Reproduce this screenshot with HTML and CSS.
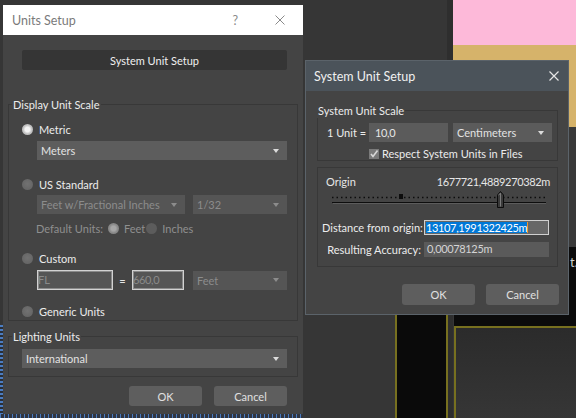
FILE: index.html
```html
<!DOCTYPE html>
<html>
  <head>
    <meta charset="UTF-8" />
    <title>Units Setup</title>
    <link rel="stylesheet" href="styles.css">
  </head>
  <body>
    <!-- viewports behind the dialogs -->
    <div class="backdrop">
      <div class="bd-strip"></div>
      <div class="bd-pink"></div>
      <div class="bd-tan"></div>
      <div class="bd-gray"></div>
      <div class="bd-black-right"><span class="bd-text">t.</span></div>
      <div class="bd-viewport"></div>
      <div class="bd-black-mid"></div>
      <div class="bd-blue-left"></div>
      <div class="bd-blue-bottom"></div>
    </div>

    <!-- Units Setup -->
    <div class="dialog units-dialog">
      <div class="titlebar light">
        <span class="title">Units Setup</span>
        <span class="tb-help">?</span>
        <svg class="tb-close" width="10" height="10" viewBox="0 0 10 10">
          <path d="M0.5 0.5L9.5 9.5M9.5 0.5L0.5 9.5" stroke="#8a8a8a" stroke-width="1" fill="none" />
        </svg>
      </div>
      <div class="dialog-body">
        <button class="btn-dark">System Unit Setup</button>

        <div class="group display-group">
          <div class="group-label">Display Unit Scale</div>

          <div class="option mt-9"><span class="radio on"></span>Metric</div>
          <div class="indent mt-4">
            <div class="select w-250">Meters<span class="caret"></span></div>
          </div>

          <div class="option mt-16"><span class="radio"></span>US Standard</div>
          <div class="indent row mt-3">
            <div class="select disabled w-148">Feet w/Fractional Inches<span class="caret"></span></div>
            <div class="select disabled w-94">1/32<span class="caret"></span></div>
          </div>
          <div class="default-units mt-6">
            <span class="du-label">Default Units:</span>
            <span class="radio dis-on"></span><span class="du-text">Feet</span>
            <span class="radio dis"></span><span class="du-text">Inches</span>
          </div>

          <div class="option mt-14"><span class="radio"></span>Custom</div>
          <div class="indent row custom-row mt-4">
            <div class="field w-76">FL</div>
            <span class="equals">=</span>
            <div class="field w-52 num">660,0</div>
            <div class="select disabled w-94">Feet<span class="caret"></span></div>
          </div>

          <div class="option mt-13"><span class="radio"></span>Generic Units</div>
        </div>

        <div class="group lighting-group">
          <div class="group-label">Lighting Units</div>
          <div class="select w-265 mt-5">International<span class="caret"></span></div>
        </div>

        <div class="btn-row">
          <button class="btn">OK</button>
          <button class="btn">Cancel</button>
        </div>
      </div>
    </div>

    <!-- System Unit Setup -->
    <div class="dialog sus-dialog">
      <div class="titlebar dark">
        <span class="title">System Unit Setup</span>
        <svg class="tb-close" width="10" height="10" viewBox="0 0 10 10">
          <path d="M0.5 0.5L9.5 9.5M9.5 0.5L0.5 9.5" stroke="#e6e6e6" stroke-width="1.2" fill="none" />
        </svg>
      </div>
      <div class="sus-body">
        <div class="group scale-group">
          <div class="group-label">System Unit Scale</div>
          <div class="row unit-row mt-5">
            <span class="unit-label">1 Unit =</span>
            <div class="input w-79 num">10,0</div>
            <div class="select w-99">Centimeters<span class="caret"></span></div>
          </div>
          <div class="check-row mt-5">
            <span class="checkbox">
              <svg width="10" height="10" viewBox="0 0 10 10">
                <path d="M2 5L4 7.5L8.5 1.5" stroke="#d8d8d8" stroke-width="1.6" fill="none" />
              </svg>
            </span>
            Respect System Units in Files
          </div>
        </div>

        <div class="origin-box">
          <div class="origin-row">
            <span>Origin</span>
            <span class="num">1677721,4889270382m</span>
          </div>
          <svg class="slider" width="216" height="17" viewBox="0 0 216 17">
            <line x1="0" y1="6.5" x2="216" y2="6.5" stroke="#0d0d0d" stroke-width="1.5" stroke-dasharray="1.5 3" />
            <rect x="67" y="3" width="4" height="5" fill="#0d0d0d" />
            <line x1="0" y1="11.5" x2="214" y2="11.5" stroke="#0d0d0d" stroke-width="1" />
            <line x1="1" y1="12.5" x2="214" y2="12.5" stroke="#5c5c5c" stroke-width="1" />
            <path d="M165.5 4L168.5 0.5L171.5 4V16.5H165.5Z" fill="#3a3a3a" stroke="#0d0d0d" stroke-width="1" />
            <path d="M166.5 4.3L168.5 2V15.5" stroke="#7a7a7a" stroke-width="1" fill="none" />
          </svg>
          <div class="value-row mt-12">
            <span class="value-label">Distance from origin:</span>
            <div class="value-field active"><span class="selected num">13107,1991322425m</span></div>
          </div>
          <div class="value-row mt-7">
            <span class="value-label">Resulting Accuracy:</span>
            <div class="value-field num">0,00078125m</div>
          </div>
        </div>

        <div class="btn-row sus-buttons">
          <button class="btn tall">OK</button>
          <button class="btn tall">Cancel</button>
        </div>
      </div>
    </div>
  </body>
</html>
```

FILE: styles.css
```css
* {
  margin: 0;
  padding: 0;
  box-sizing: border-box;
}

html,
body {
  width: 576px;
  height: 418px;
  overflow: hidden;
}

body {
  position: relative;
  background: #363636;
  font-family: Lato, "Noto Sans", sans-serif;
  font-size: 11px;
  color: #e6e6e6;
}

button {
  font-family: inherit;
  font-size: 11px;
  border: none;
  cursor: pointer;
}

.num {
  letter-spacing: -0.35px;
}

/* backdrop */
.backdrop div {
  position: absolute;
}

.bd-strip {
  left: 447px;
  top: 0;
  width: 6px;
  height: 418px;
  background: #2e2e2e;
}

.bd-pink {
  left: 453px;
  top: 0;
  width: 123px;
  height: 45px;
  background: #fdb9d9;
}

.bd-tan {
  left: 453px;
  top: 45px;
  width: 123px;
  height: 82px;
  background: #d6b36a;
}

.bd-gray {
  left: 453px;
  top: 127px;
  width: 123px;
  height: 120px;
  background: #393939;
}

.bd-black-right {
  left: 454px;
  top: 247px;
  width: 122px;
  height: 171px;
  background: #0b0b0b;
  overflow: hidden;
}

.bd-text {
  position: absolute;
  left: 116px;
  top: 7px;
  color: #cfcfcf;
  font-size: 13px;
}

.bd-viewport {
  left: 454px;
  top: 326px;
  width: 122px;
  height: 92px;
  border-left: 2px solid #77701f;
  border-top: 2px solid #77701f;
  background: linear-gradient(#2b2b2b, #363636);
}

.bd-black-mid {
  left: 395px;
  top: 250px;
  width: 53px;
  height: 168px;
  background: #0a0a0a;
  border-left: 2px solid #77701f;
  border-right: 2px solid #77701f;
}

.bd-blue-left {
  left: 0;
  top: 325px;
  width: 3px;
  height: 93px;
  background: repeating-linear-gradient(#4b7cc0 0 2px, #2a2f38 2px 4px);
}

.bd-blue-bottom {
  left: 0;
  top: 414px;
  width: 303px;
  height: 4px;
  background: repeating-linear-gradient(90deg, #4b7cc0 0 1px, #303540 1px 4px);
}

/* dialogs */
.dialog {
  position: absolute;
  background: #444;
}

.units-dialog {
  left: 3px;
  top: 5px;
  width: 300px;
  height: 409px;
}

.sus-dialog {
  left: 305px;
  top: 60px;
  width: 264px;
  height: 255px;
  border: 1px solid #5b636a;
}

.titlebar {
  display: flex;
  align-items: center;
  height: 30px;
  font-size: 12.5px;
}

.titlebar .title {
  flex: 1;
}

.titlebar.light {
  background: #fff;
  color: #7a7a7a;
  padding-left: 9px;
}

.titlebar.dark {
  background: #4b535a;
  color: #f0f0f0;
  padding-left: 8px;
}

.tb-help {
  color: #8a8a8a;
  margin-right: 37px;
}

.light .tb-close {
  margin-right: 18px;
}

.dark .tb-close {
  margin-right: 9px;
}

.dialog-body {
  padding: 15px 5px 0 5px;
}

.btn-dark {
  display: block;
  width: 265px;
  height: 20px;
  margin-left: 14px;
  background: #353535;
  color: #f0f0f0;
  border-radius: 2px;
}

/* group boxes */
.group {
  border: 1px solid #383838;
}

.group-label {
  display: table;
  margin: -8px 0 0 -10px;
  padding: 0 1px;
  line-height: 15px;
  background: #444;
  color: #ececec;
}

.display-group {
  margin-top: 34px;
  padding: 0 10px 1px 13px;
}

.lighting-group {
  margin-top: 15px;
  padding: 0 10px 8px 13px;
}

.option {
  display: flex;
  align-items: center;
  gap: 6px;
  height: 16px;
  color: #ececec;
}

.radio {
  flex: none;
  width: 11px;
  height: 11px;
  border-radius: 50%;
  background: radial-gradient(circle at 50% 45%, #727272, #616161);
}

.radio.on {
  background: radial-gradient(circle at 50% 50%, #f4f4f4 0 30%, #c4c4c4 55%, #a8a8a8);
}

.radio.dis-on {
  background: radial-gradient(circle at 50% 50%, #a6a6a6 0 30%, #8a8a8a 55%, #7a7a7a);
}

.radio.dis {
  background: #5c5c5c;
}

.indent {
  margin-left: 15px;
}

.row {
  display: flex;
  align-items: center;
  gap: 8px;
}

.select {
  display: flex;
  align-items: center;
  height: 19px;
  padding-left: 4px;
  background: #5d5d5d;
  color: #e2e2e2;
  white-space: nowrap;
}

.select.disabled {
  background: #555;
  color: #8c8c8c;
}

.caret {
  margin-left: auto;
  margin-right: 8px;
  border-left: 3px solid transparent;
  border-right: 3px solid transparent;
  border-top: 4px solid #dcdcdc;
}

.disabled .caret {
  border-top-color: #8c8c8c;
}

.default-units {
  display: flex;
  align-items: center;
  height: 16px;
  margin-left: 14px;
  color: #8f8f8f;
}

.du-label {
  margin-right: 5px;
}

.du-text {
  margin: 0 1px 0 5px;
}

.custom-row {
  gap: 0;
}

.field {
  height: 20px;
  line-height: 17px;
  background: #555;
  color: #8a8a8a;
  border: 1px solid #d2d2d2;
  box-shadow: inset 0 0 0 1px #8a8a8a;
}

.equals {
  width: 19px;
  text-align: center;
  color: #e6e6e6;
}

.custom-row .select {
  margin-left: 9px;
}

.btn-row {
  display: flex;
  justify-content: flex-end;
  gap: 12px;
  margin-top: 9px;
  padding-right: 11px;
}

.btn {
  width: 73px;
  height: 20px;
  background: #5e5e5e;
  color: #e0e0e0;
  border-radius: 3px;
}

.btn.tall {
  height: 21px;
}

/* System Unit Setup body */
.sus-body {
  padding: 0 9px 0 11px;
}

.scale-group {
  margin: 19px 1px 0 0;
  padding: 0 5px 0 9px;
}

.unit-row {
  gap: 5px;
}

.unit-label {
  width: 37px;
  white-space: nowrap;
  color: #ececec;
}

.input {
  height: 19px;
  padding-left: 6px;
  line-height: 19px;
  background: #5b5b5b;
  color: #e6e6e6;
}

.unit-row .select {
  background: #5b5b5b;
}

.check-row {
  display: flex;
  align-items: center;
  gap: 3px;
  height: 13px;
  margin-left: 42px;
  color: #ececec;
}

.checkbox {
  display: flex;
  width: 10px;
  height: 10px;
  background: #7a7a7a;
}

.origin-box {
  margin: 6px 1px 0 0;
  padding: 5px 7px 9px 4px;
  border: 1px solid #383838;
}

.origin-row {
  display: flex;
  justify-content: space-between;
  align-items: center;
  height: 16px;
  padding-left: 4px;
  color: #e6e6e6;
}

.slider {
  display: block;
  margin: 2px 0 0 10px;
}

.value-row {
  display: flex;
  align-items: center;
  gap: 3px;
  height: 15px;
}

.value-label {
  width: 99px;
  text-align: right;
  color: #ececec;
  white-space: nowrap;
}

.value-field {
  width: 125px;
  height: 15px;
  padding-left: 3px;
  line-height: 14px;
  background: #5a5a5a;
  color: #d4d4d4;
}

.value-field.active {
  padding-left: 1px;
  padding-top: 1px;
  background: #676767;
  border: 1px solid #d0d0d0;
  line-height: 11px;
}

.selected {
  display: inline-block;
  background: #0078d7;
  color: #fff;
  border-right: 1px solid #f0952c;
}

.sus-buttons {
  gap: 11px;
  margin-top: 17px;
  padding-right: 0;
}

.w-250 { width: 250px; }
.w-265 { width: 265px; }
.w-148 { width: 148px; }
.w-94 { width: 94px; }
.w-99 { width: 99px; }
.w-79 { width: 79px; }
.w-76 { width: 76px; }
.w-52 { width: 52px; }

.mt-3 { margin-top: 3px; }
.mt-4 { margin-top: 4px; }
.mt-5 { margin-top: 5px; }
.mt-6 { margin-top: 6px; }
.mt-7 { margin-top: 7px; }
.mt-9 { margin-top: 9px; }
.mt-12 { margin-top: 12px; }
.mt-13 { margin-top: 13px; }
.mt-14 { margin-top: 14px; }
.mt-16 { margin-top: 16px; }
```
